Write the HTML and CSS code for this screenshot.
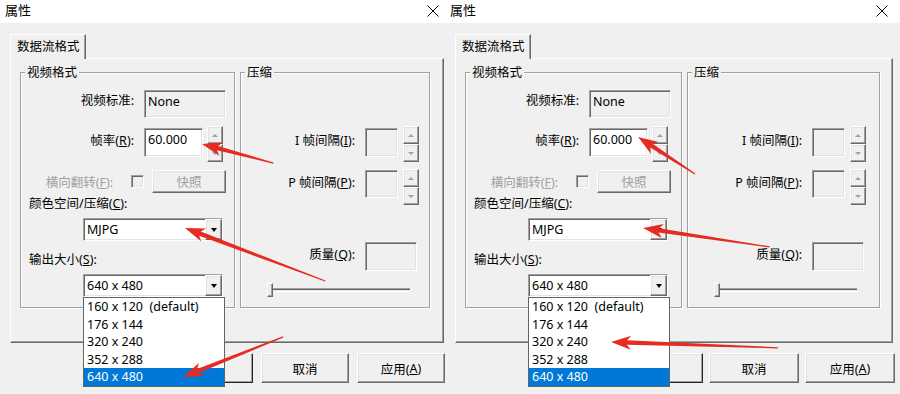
FILE: index.html
```html
<!DOCTYPE html>
<html lang="zh-CN">
<head>
    <meta charset="UTF-8">
    <meta name="viewport" content="width=device-width, initial-scale=1.0">
    <title>属性</title>
    <link rel="stylesheet" href="styles.css">
</head>
<body>
    <div class="dialog">
        <div class="titlebar">
            <span class="title">属性</span>
            <svg class="close" width="12" height="12" viewBox="0 0 12 12"><path d="M0.5 0.5 11.5 11.5 M11.5 0.5 0.5 11.5" stroke="#000" stroke-width="1" fill="none"/></svg>
        </div>
        <div class="dlg-body">
            <div class="tab">数据流格式</div>
            <div class="panel raised">
                <div class="group video">
                    <span class="legend">视频格式</span>
                    <div class="row r-std">
                        <span class="lbl">视频标准:</span>
                        <div class="field sunken ro std">None</div>
                    </div>
                    <div class="row r-rate">
                        <span class="lbl">帧率(<u>R</u>):</span>
                        <div class="field sunken rate">60.000</div>
                        <div class="spin"><span class="spin-btn up raised"></span><span class="spin-btn down raised"></span></div>
                    </div>
                    <div class="row r-flip">
                        <span class="lbl disabled">横向翻转(<u>F</u>):</span>
                        <span class="check sunken"></span>
                        <span class="btn snap raised disabled">快照</span>
                    </div>
                    <div class="caption c-color">颜色空间/压缩(<u>C</u>):</div>
                    <div class="combo sunken"><span class="combo-text">MJPG</span><span class="drop raised"></span></div>
                    <div class="caption c-size">输出大小(<u>S</u>):</div>
                    <div class="combo sunken"><span class="combo-text">640 x 480</span><span class="drop raised"></span></div>
                </div>
                <div class="group compress">
                    <span class="legend">压缩</span>
                    <div class="row r-iframe">
                        <span class="lbl">I 帧间隔(<u>I</u>):</span>
                        <div class="field sunken ro small"></div>
                        <div class="spin"><span class="spin-btn up raised"></span><span class="spin-btn down raised"></span></div>
                    </div>
                    <div class="row r-pframe">
                        <span class="lbl">P 帧间隔(<u>P</u>):</span>
                        <div class="field sunken ro small"></div>
                        <div class="spin"><span class="spin-btn up raised"></span><span class="spin-btn down raised"></span></div>
                    </div>
                    <div class="row r-quality">
                        <span class="lbl">质量(<u>Q</u>):</span>
                        <div class="field sunken ro quality"></div>
                    </div>
                    <div class="slider"><span class="thumb raised"></span><span class="track"></span></div>
                </div>
            </div>
            <div class="buttons">
                <span class="btn raised default">确定</span>
                <span class="btn raised">取消</span>
                <span class="btn raised">应用(<u>A</u>)</span>
            </div>
        </div>
        <ul class="droplist">
            <li>160 x 120  (default)</li>
            <li>176 x 144</li>
            <li>320 x 240</li>
            <li>352 x 288</li>
            <li class="sel">640 x 480</li>
        </ul>
        <svg class="marks" viewBox="0 0 445 394">
            <polygon transform="translate(202 144) rotate(15)" points="0,0 20,-7 16,-2.2 74,-0.6 74,0.6 16,2.2 20,7"/>
            <polygon transform="translate(185 228) rotate(20.7)" points="0,0 20,-7 16,-2.2 150,-0.6 150,0.6 16,2.2 20,7"/>
            <polygon transform="translate(183 377) rotate(-21.8)" points="0,0 20,-7 16,-2.2 108,-0.6 108,0.6 16,2.2 20,7"/>
        </svg>
    </div>

    <div class="dialog second">
        <div class="titlebar">
            <span class="title">属性</span>
            <svg class="close" width="12" height="12" viewBox="0 0 12 12"><path d="M0.5 0.5 11.5 11.5 M11.5 0.5 0.5 11.5" stroke="#000" stroke-width="1" fill="none"/></svg>
        </div>
        <div class="dlg-body">
            <div class="tab">数据流格式</div>
            <div class="panel raised">
                <div class="group video">
                    <span class="legend">视频格式</span>
                    <div class="row r-std">
                        <span class="lbl">视频标准:</span>
                        <div class="field sunken ro std">None</div>
                    </div>
                    <div class="row r-rate">
                        <span class="lbl">帧率(<u>R</u>):</span>
                        <div class="field sunken rate">60.000</div>
                        <div class="spin"><span class="spin-btn up raised"></span><span class="spin-btn down raised"></span></div>
                    </div>
                    <div class="row r-flip">
                        <span class="lbl disabled">横向翻转(<u>F</u>):</span>
                        <span class="check sunken"></span>
                        <span class="btn snap raised disabled">快照</span>
                    </div>
                    <div class="caption c-color">颜色空间/压缩(<u>C</u>):</div>
                    <div class="combo sunken"><span class="combo-text">MJPG</span><span class="drop raised"></span></div>
                    <div class="caption c-size">输出大小(<u>S</u>):</div>
                    <div class="combo sunken"><span class="combo-text">640 x 480</span><span class="drop raised"></span></div>
                </div>
                <div class="group compress">
                    <span class="legend">压缩</span>
                    <div class="row r-iframe">
                        <span class="lbl">I 帧间隔(<u>I</u>):</span>
                        <div class="field sunken ro small"></div>
                        <div class="spin"><span class="spin-btn up raised"></span><span class="spin-btn down raised"></span></div>
                    </div>
                    <div class="row r-pframe">
                        <span class="lbl">P 帧间隔(<u>P</u>):</span>
                        <div class="field sunken ro small"></div>
                        <div class="spin"><span class="spin-btn up raised"></span><span class="spin-btn down raised"></span></div>
                    </div>
                    <div class="row r-quality">
                        <span class="lbl">质量(<u>Q</u>):</span>
                        <div class="field sunken ro quality"></div>
                    </div>
                    <div class="slider"><span class="thumb raised"></span><span class="track"></span></div>
                </div>
            </div>
            <div class="buttons">
                <span class="btn raised default">确定</span>
                <span class="btn raised">取消</span>
                <span class="btn raised">应用(<u>A</u>)</span>
            </div>
        </div>
        <ul class="droplist">
            <li>160 x 120  (default)</li>
            <li>176 x 144</li>
            <li>320 x 240</li>
            <li>352 x 288</li>
            <li class="sel">640 x 480</li>
        </ul>
        <svg class="marks" viewBox="0 0 455 394">
            <polygon transform="translate(193 137) rotate(33)" points="0,0 20,-7 16,-2.2 68,-0.6 68,0.6 16,2.2 20,7"/>
            <polygon transform="translate(198 228) rotate(8.5)" points="0,0 20,-7 16,-2.2 128,-0.6 128,0.6 16,2.2 20,7"/>
            <polygon transform="translate(166 342) rotate(2)" points="0,0 20,-7 16,-2.2 167,-0.6 167,0.6 16,2.2 20,7"/>
        </svg>
    </div>
</body>
</html>
```

FILE: styles.css
```css
body {
    margin: 0;
    width: 900px;
    height: 394px;
    overflow: hidden;
    display: flex;
    background: #f0f0f0;
    font-family: "Noto Sans", "Noto Sans CJK SC", sans-serif;
    font-size: 12.5px;
    color: #000;
}
.dialog {
    position: relative;
    width: 445px;
    height: 394px;
    flex-shrink: 0;
}
.dialog.second {
    width: 455px;
}
.titlebar {
    height: 23px;
    background: #fff;
    display: flex;
    align-items: center;
    justify-content: space-between;
    padding: 0 6px 2px 5px;
    box-sizing: border-box;
}
.second .titlebar {
    padding-right: 12px;
}
.title {
    font-size: 13px;
    line-height: 21px;
}
.dlg-body {
    height: 371px;
    padding: 11px 0 0 10px;
    box-sizing: border-box;
}

/* 3D borders */
.raised {
    border: 1px solid;
    border-color: #fff #696969 #696969 #fff;
    box-shadow: inset -1px -1px #a0a0a0, inset 1px 1px #e3e3e3;
    box-sizing: border-box;
    background: #f0f0f0;
}
.sunken {
    border: 1px solid;
    border-color: #a0a0a0 #fff #fff #a0a0a0;
    box-shadow: inset 1px 1px #696969, inset -1px -1px #e3e3e3;
    box-sizing: border-box;
    background: #fff;
}

.tab {
    position: relative;
    z-index: 1;
    width: 76px;
    height: 25px;
    margin-bottom: -1px;
    padding-left: 6px;
    line-height: 23px;
    box-sizing: border-box;
    background: #f0f0f0;
    border-top: 1px solid #fff;
    border-left: 1px solid #fff;
    border-right: 1px solid #696969;
    box-shadow: inset -1px 0 #a0a0a0;
}
.panel {
    width: 434px;
    height: 285px;
    padding: 13px 0 0 9px;
    display: flex;
    align-items: flex-start;
    gap: 5px;
    box-shadow: inset -1px -1px #a0a0a0;
}
.second .panel {
    width: 438px;
}

.group {
    height: 236px;
    border: 1px solid #a0a0a0;
    box-shadow: inset 1px 1px #fff, 1px 1px #fff;
    box-sizing: border-box;
    display: flex;
    flex-direction: column;
    align-items: flex-start;
}
.video {
    width: 215px;
}
.compress {
    width: 190px;
}
.second .video {
    width: 217px;
}
.second .compress {
    width: 193px;
}
.legend {
    margin: -9px 0 0 4px;
    padding: 0 2px;
    height: 17px;
    line-height: 17px;
    background: #f0f0f0;
}

.row {
    display: flex;
    align-items: flex-start;
}
.lbl {
    width: 113px;
    text-align: right;
    white-space: nowrap;
}
.compress .lbl {
    width: 114px;
}
.disabled {
    color: #a0a0a0;
}
.field {
    margin-left: 10px;
    padding-left: 3px;
    line-height: 22px;
}
.field.ro {
    background: #f0f0f0;
}

.r-std {
    margin-top: 9px;
}
.r-std .lbl {
    line-height: 22px;
}
.std {
    width: 82px;
    height: 28px;
}
.r-rate, .r-iframe {
    margin-top: 8px;
}
.r-iframe {
    margin-top: 45px;
}
.r-rate .lbl, .r-iframe .lbl {
    margin-top: 2px;
    line-height: 25px;
}
.rate {
    width: 59px;
    height: 29px;
    margin-top: 2px;
}
.small {
    width: 33px;
    height: 29px;
    margin-top: 2px;
}
.r-pframe {
    margin-top: 7px;
}
.r-pframe .lbl {
    margin-top: 1px;
    line-height: 26px;
}
.r-pframe .small {
    height: 28px;
    margin-top: 1px;
}
.r-quality {
    margin-top: 37px;
}
.r-quality .lbl {
    line-height: 26px;
}
.quality {
    width: 52px;
    height: 29px;
}

.spin {
    display: flex;
    flex-direction: column;
    width: 16px;
    height: 36px;
    margin-left: 4px;
}
.compress .spin {
    margin-left: 5px;
}
.spin-btn {
    flex: 1;
    display: flex;
    align-items: center;
    justify-content: center;
}
.spin-btn::after {
    content: "";
    border-left: 3px solid transparent;
    border-right: 3px solid transparent;
}
.up::after {
    border-bottom: 3px solid #a0a0a0;
}
.down::after {
    border-top: 3px solid #a0a0a0;
}

.r-flip {
    margin-top: 8px;
    height: 23px;
    align-items: center;
}
.r-flip .lbl {
    width: 92px;
}
.check {
    width: 13px;
    height: 13px;
    margin-left: 18px;
    background: #f0f0f0;
}
.btn {
    width: 88px;
    height: 30px;
    display: flex;
    align-items: center;
    justify-content: center;
}
.snap {
    width: 74px;
    height: 23px;
    margin-left: 8px;
}

.caption {
    padding-left: 8px;
    line-height: 17px;
    white-space: nowrap;
}
.c-color {
    margin-top: 2px;
}
.c-size {
    margin-top: 10px;
}
.combo {
    display: flex;
    width: 140px;
    height: 23px;
    margin: 6px 0 0 62px;
}
.combo-text {
    flex: 1;
    padding-left: 3px;
    line-height: 21px;
}
.drop {
    width: 17px;
    height: 21px;
    display: flex;
    align-items: center;
    justify-content: center;
}
.drop::after {
    content: "";
    border-left: 3.5px solid transparent;
    border-right: 3.5px solid transparent;
    border-top: 4px solid #000;
}

.slider {
    display: flex;
    align-items: center;
    height: 16px;
    margin: 11px 0 0 26px;
}
.thumb {
    position: relative;
    z-index: 1;
    width: 6px;
    height: 14px;
}
.track {
    width: 140px;
    height: 4px;
    margin-left: -3px;
    box-sizing: border-box;
    border-top: 1px solid #a0a0a0;
    border-bottom: 1px solid #fff;
    background: #e3e3e3;
    box-shadow: inset 0 1px #696969;
}

.buttons {
    display: flex;
    justify-content: flex-end;
    gap: 8px;
    width: 435px;
    margin-top: 10px;
}
.second .buttons {
    width: 440px;
    gap: 6px;
}
.second .btn {
    width: 90px;
}
.second .snap {
    width: 74px;
}
.default {
    border-color: #fff #262626 #262626 #fff;
}

.droplist {
    position: absolute;
    left: 83px;
    top: 297px;
    z-index: 2;
    width: 142px;
    margin: 0;
    padding: 0;
    list-style: none;
    background: #fff;
    border: 1px solid #646464;
    box-sizing: border-box;
}
.droplist li {
    height: 17.6px;
    line-height: 17.6px;
    padding-left: 3px;
    white-space: pre;
}
.droplist .sel {
    background: #0078d7;
    color: #fff;
}

.marks {
    position: absolute;
    left: 0;
    top: 0;
    z-index: 3;
    width: 100%;
    height: 100%;
    pointer-events: none;
    fill: #e62b21;
}
```
